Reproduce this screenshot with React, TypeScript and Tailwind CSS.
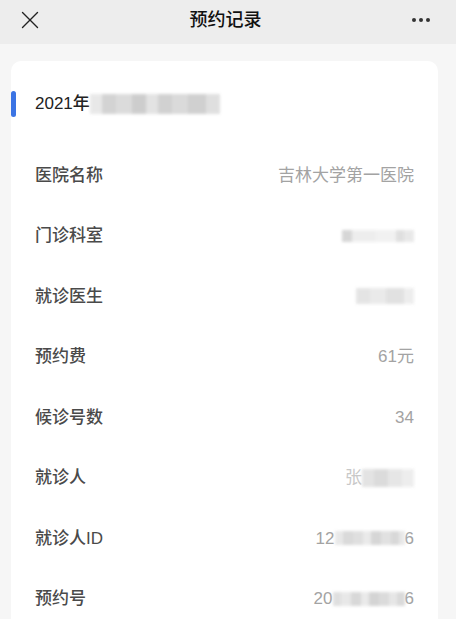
import { X } from 'lucide-react';

const font = { fontFamily: '"Liberation Sans", "Noto Sans CJK SC", sans-serif' };

function Blur({ shades, h = 'h-[14px]' }: { shades: [number, string][]; h?: string }) {
  return (
    <span className={`inline-flex ${h} blur-[1.5px] opacity-90`}>
      {shades.map(([w, c], i) => (
        <span key={i} style={{ width: w, background: c }} className="h-full" />
      ))}
    </span>
  );
}

function Row({ label, children }: { label: string; children: React.ReactNode }) {
  return (
    <div className="h-[60.5px] flex items-center justify-between pl-[24px] pr-[24px]">
      <span className="text-[17px] text-[#4a4a4a] font-medium">{label}</span>
      <span className="text-[17px] text-[#a3a3a3] flex items-center">{children}</span>
    </div>
  );
}

export default function App() {
  return (
    <div className="w-[456px] h-[619px] overflow-hidden bg-[#f6f6f6]" style={font}>
      {/* Header */}
      <header className="h-[44px] bg-[#ededed] flex items-center justify-between pl-[15px] pr-[26px] pb-[4px]">
        <X className="w-[30px] h-[30px] text-[#222]" strokeWidth={1.1} />
        <span className="text-[18px] font-medium text-[#111] -ml-[6px]">预约记录</span>
        <span className="flex gap-[3px] items-center">
          <span className="w-[4px] h-[4px] rounded-full bg-[#333]" />
          <span className="w-[4px] h-[4px] rounded-full bg-[#333]" />
          <span className="w-[4px] h-[4px] rounded-full bg-[#333]" />
        </span>
      </header>

      <div className="pt-[17px] pl-[11px]">
        <div className="w-[427px] bg-white rounded-[10px] pt-[30px] h-[600px]">
          <div className="flex items-center h-[26px] relative">
            <span className="w-[5px] h-[26px] rounded-[3px] bg-[#3b74e4]" />
            <span className="ml-[19px] text-[17px] font-medium text-[#222]">2021年</span>
            <Blur
              h="h-[20px]"
              shades={[[12, '#e6e6e6'], [14, '#cfcfcf'], [16, '#d8d8d8'], [14, '#c8c8c8'], [12, '#e0e0e0'], [14, '#cdcdcd'], [16, '#d6d6d6'], [18, '#cbcbcb'], [14, '#dcdcdc']]}
            />
          </div>
          <div className="h-[28px]" />
          <Row label="医院名称">吉林大学第一医院</Row>
          <Row label="门诊科室">
            <Blur shades={[[10, '#d2d2d2'], [24, '#ececec'], [20, '#f0f0f0'], [8, '#dcdcdc'], [10, '#e6e6e6']]} h="h-[12px]" />
          </Row>
          <Row label="就诊医生">
            <Blur shades={[[14, '#e2e2e2'], [16, '#e8e8e8'], [18, '#dedede'], [10, '#ececec']]} h="h-[16px]" />
          </Row>
          <Row label="预约费">61元</Row>
          <Row label="候诊号数">34</Row>
          <Row label="就诊人">
            <span className="text-[#c8c8c8]">张</span>
            <Blur shades={[[12, '#e0e0e0'], [14, '#d8d8d8'], [14, '#e4e4e4'], [12, '#ececec']]} h="h-[18px]" />
          </Row>
          <Row label="就诊人ID">
            12
            <Blur shades={[[8, '#e6e6e6'], [10, '#d6d6d6'], [10, '#dcdcdc'], [8, '#e8e8e8'], [10, '#d2d2d2'], [10, '#dedede'], [8, '#d4d4d4'], [6, '#e6e6e6']]} />
            6
          </Row>
          <Row label="预约号">
            20
            <Blur shades={[[8, '#dcdcdc'], [10, '#e6e6e6'], [10, '#d4d4d4'], [8, '#e8e8e8'], [10, '#d0d0d0'], [10, '#d8d8d8'], [8, '#e4e4e4'], [8, '#d6d6d6']]} />
            6
          </Row>
        </div>
      </div>
    </div>
  );
}
